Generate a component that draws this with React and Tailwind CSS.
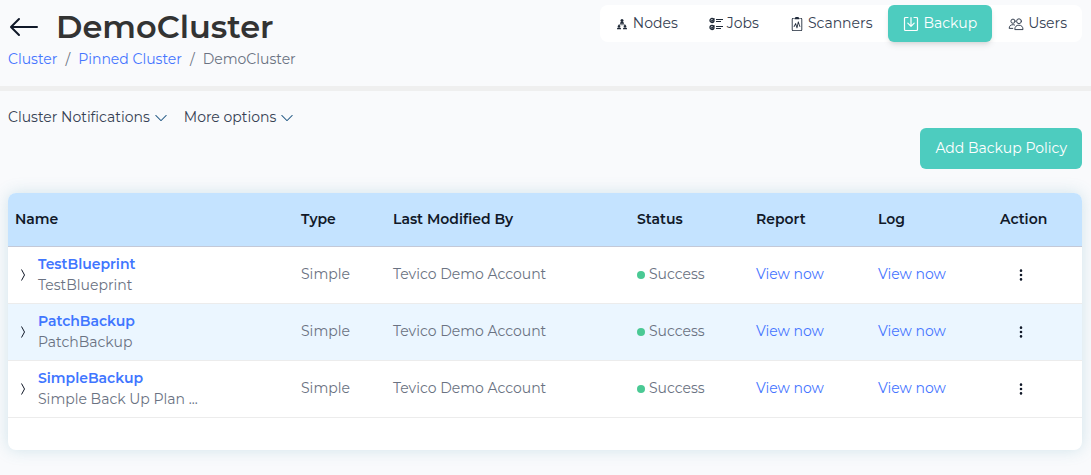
import { BsArrowLeft, BsChevronDown, BsClipboard2Pulse, BsThreeDotsVertical } from "react-icons/bs";

function NodesIcon() {
  return (
    <svg viewBox="0 0 14 14" className="size-3.5" fill="#1f2937" aria-hidden="true">
      <circle cx="7" cy="3.500" r="1.500" />
      <path d="M5 6.800V6.200c0-.9.8-1.300 2-1.300s2 .4 2 1.300v.6z" />
      <path d="M6.600 6.500h.8v.8h3v1H3.600v-1h3z" opacity="0.6" />
      <circle cx="4" cy="9.300" r="1.200" />
      <path d="M2 12.300v-.7c0-.8.800-1.200 2-1.200s2 .4 2 1.200v.7z" />
      <circle cx="10" cy="9.300" r="1.200" />
      <path d="M8 12.300v-.7c0-.8.800-1.200 2-1.200s2 .4 2 1.200v.7z" />
    </svg>
  );
}

function JobsIcon() {
  return (
    <svg viewBox="0 0 14 14" className="size-3.5" fill="none" stroke="#1f2937" aria-hidden="true">
      <circle cx="3" cy="3.500" r="2" strokeWidth="1.3" />
      <path d="M2 3.400l1 1 2.400-3" strokeWidth="1.2" />
      <circle cx="3" cy="10.500" r="2" strokeWidth="1.3" />
      <path d="M2 10.400l1 1 2.400-3" strokeWidth="1.2" />
      <path d="M7 2.500h7M7 9.500h7" strokeWidth="1.2" />
      <path d="M7 4.500h5M7 11.500h5" strokeWidth="1" />
    </svg>
  );
}

function ScannersIcon() {
  return <BsClipboard2Pulse className="size-3.5 text-gray-800" aria-hidden="true" />;
}

function BackupIcon() {
  return (
    <svg viewBox="0 0 16 16" className="size-4" fill="none" stroke="currentColor" strokeWidth="1.2" strokeLinecap="round" strokeLinejoin="round" aria-hidden="true">
      <path d="M5 1.500H2.500a1 1 0 0 0-1 1v11a1 1 0 0 0 1 1h11a1 1 0 0 0 1-1v-11a1 1 0 0 0-1-1H11" />
      <path d="M8 1.500v8.700M4.800 7.200L8 10.400l3.200-3.200" />
    </svg>
  );
}

function UsersIcon() {
  return (
    <svg viewBox="0 0 16 16" className="size-4" fill="none" stroke="#374151" strokeWidth="1" strokeLinecap="round" strokeLinejoin="round" aria-hidden="true">
      <circle cx="5" cy="5.200" r="2.100" />
      <circle cx="11" cy="5.200" r="2.400" />
      <path d="M6.800 13.200c0-2.600 1.600-4 4.100-4s4.100 1.400 4.100 4z" />
      <path d="M6.600 9C6 8.700 5.500 8.700 5 8.700c-2.400 0-3.800 1.300-3.800 3.700h3.600" />
    </svg>
  );
}

const tabs = [
  { label: "Nodes", Icon: NodesIcon },
  { label: "Jobs", Icon: JobsIcon },
  { label: "Scanners", Icon: ScannersIcon },
  { label: "Backup", Icon: BackupIcon, active: true },
  { label: "Users", Icon: UsersIcon },
];

const columns = [
  { label: "Name", width: "w-[286px]" },
  { label: "Type", width: "w-[92px]" },
  { label: "Last Modified By", width: "w-[244px]" },
  { label: "Status", width: "w-[119px]" },
  { label: "Report", width: "w-[122px]" },
  { label: "Log", width: "w-[122px]" },
  { label: "Action", width: "w-[89px]" },
];

const policies = [
  { name: "TestBlueprint", description: "TestBlueprint" },
  { name: "PatchBackup", description: "PatchBackup" },
  { name: "SimpleBackup", description: "Simple Back Up Plan ..." },
];

export default function App() {
  return (
    <div className="min-h-screen bg-[#f9fafc] font-['Montserrat','Inter',sans-serif] text-[14px] leading-[21px] font-normal text-gray-700">
      <header className="flex items-start justify-between border-b-5 border-[#efefef] pt-[5px] pr-[9px] pb-4 pl-2">
        <div>
          <div className="flex items-center gap-4">
            <a href="#back" aria-label="Back" className="text-gray-900">
              <BsArrowLeft className="size-8" />
            </a>
            <h1 className="text-[32px] leading-[44px] font-semibold text-[#333]">DemoCluster</h1>
          </div>
          <nav aria-label="Breadcrumb" className="flex gap-2 text-gray-500">
            <a href="#cluster" className="text-[#4575ff]">Cluster</a>
            <span>/</span>
            <a href="#pinned" className="text-[#4575ff]">Pinned Cluster</a>
            <span>/</span>
            <span>DemoCluster</span>
          </nav>
        </div>
        <nav aria-label="Cluster sections" className="flex gap-px rounded-lg bg-white">
          {tabs.map(({ label, Icon, active }) => (
            <a
              key={label}
              href={`#${label.toLowerCase()}`}
              aria-current={active ? "page" : undefined}
              className={
                active
                  ? "flex items-center gap-1 rounded-md bg-[#4dccbf] px-[15px] py-2 text-white shadow-md"
                  : "flex items-center gap-1 px-[15px] py-2"
              }
            >
              <Icon />
              {label}
            </a>
          ))}
        </nav>
      </header>

      <main className="pt-4 pr-[9px] pb-6 pl-2">
        <div className="flex gap-4">
          <button type="button" className="flex items-center gap-1">
            Cluster Notifications
            <BsChevronDown className="size-3.5 text-[#245a85]" />
          </button>
          <button type="button" className="flex items-center gap-1">
            More options
            <BsChevronDown className="size-3.5 text-[#245a85]" />
          </button>
        </div>
        <div className="flex justify-end">
          <button type="button" className="rounded-md bg-[#4dccbf] px-[15px] py-2.5 text-white">
            Add Backup Policy
          </button>
        </div>

        <section className="mt-6 overflow-hidden rounded-lg bg-white pb-8 shadow-[0_0_16px_rgba(70,150,175,0.22)]">
          <table className="w-full table-fixed border-collapse text-left">
            <thead>
              <tr className="h-[53px] border-b border-[#c3c9d8] bg-[#c4e3ff] text-gray-900">
                {columns.map(({ label, width }) => (
                  <th key={label} scope="col" className={`${width} px-[7px] font-semibold`}>
                    {label}
                  </th>
                ))}
              </tr>
            </thead>
            <tbody className="text-gray-500">
              {policies.map(({ name, description }) => (
                <tr key={name} className="h-[57px] border-b border-[#ececec] even:bg-[#ebf6ff]">
                  <td className="px-[7px]">
                    <div className="flex items-center gap-[7px]">
                      <button type="button" aria-label={`Expand ${name}`} className="flex w-4 justify-center text-gray-900">
                        <svg viewBox="0 0 6 12" className="h-3 w-1.5" fill="none" stroke="currentColor" strokeWidth="1" aria-hidden="true">
                          <path d="M1.500 0.500L4.500 6L1.500 11.500" />
                        </svg>
                      </button>
                      <div>
                        <a href={`#${name}`} className="block font-semibold text-[#3f76ff]">{name}</a>
                        <p>{description}</p>
                      </div>
                    </div>
                  </td>
                  <td className="px-[7px]">Simple</td>
                  <td className="px-[7px]">Tevico Demo Account</td>
                  <td className="px-[7px]">
                    <span className="flex items-center gap-1">
                      <span className="size-2 rounded-full bg-[#4ac994]" />
                      Success
                    </span>
                  </td>
                  <td className="px-[7px]">
                    <a href={`#${name}-report`} className="text-[#4575ff]">View now</a>
                  </td>
                  <td className="px-[7px]">
                    <a href={`#${name}-log`} className="text-[#4575ff]">View now</a>
                  </td>
                  <td className="px-[7px]">
                    <button type="button" aria-label={`Actions for ${name}`} className="ml-3.5 flex text-gray-900">
                      <BsThreeDotsVertical className="size-3.5" />
                    </button>
                  </td>
                </tr>
              ))}
            </tbody>
          </table>
        </section>
      </main>
    </div>
  );
}
